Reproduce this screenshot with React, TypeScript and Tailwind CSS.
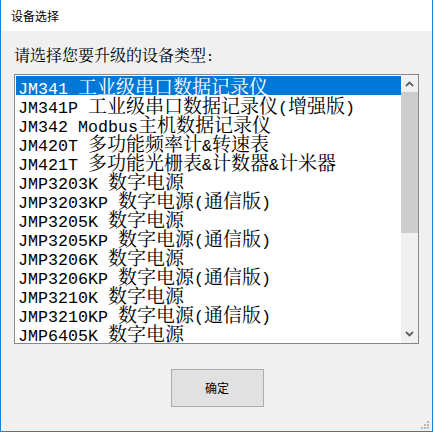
const devices = [
  "JM341 工业级串口数据记录仪",
  "JM341P 工业级串口数据记录仪(增强版)",
  "JM342 Modbus主机数据记录仪",
  "JM420T 多功能频率计&转速表",
  "JM421T 多功能光栅表&计数器&计米器",
  "JMP3203K 数字电源",
  "JMP3203KP 数字电源(通信版)",
  "JMP3205K 数字电源",
  "JMP3205KP 数字电源(通信版)",
  "JMP3206K 数字电源",
  "JMP3206KP 数字电源(通信版)",
  "JMP3210K 数字电源",
  "JMP3210KP 数字电源(通信版)",
  "JMP6405K 数字电源",
];

// SimSun style: half-width latin, full-width CJK
function Mixed({ text, small }: { text: string; small?: boolean }) {
  const parts = text.split(/([\x00-\x7f]+)/).filter((p) => p !== "");
  return (
    <>
      {parts.map((p, i) =>
        /^[\x00-\x7f]+$/.test(p) ? (
          <span
            key={i}
            className={
              small
                ? "font-['Liberation_Mono',monospace] text-[13.33px] leading-[16px]"
                : "font-['Liberation_Mono',monospace] text-[16.67px] leading-[19px]"
            }
          >
            {p}
          </span>
        ) : (
          <span key={i} className={small ? "leading-[16px]" : "leading-[19px]"}>
            {p}
          </span>
        )
      )}
    </>
  );
}

function Chevron({ up }: { up?: boolean }) {
  return (
    <svg width="9" height="6" viewBox="0 0 9 6">
      <path
        d={up ? "M1 5 L4.5 1.5 L8 5" : "M1 1 L4.5 4.5 L8 1"}
        fill="none"
        stroke="#606060"
        strokeWidth="1.8"
      />
    </svg>
  );
}

export default function App() {
  const selected = 0;

  return (
    <div className="w-[433px] h-[432px] flex flex-col border-x border-b border-[#1883d7] bg-[#f0f0f0] font-['Noto_Sans_CJK_SC',sans-serif]">
      {/* Title bar */}
      <div className="h-[31px] bg-white flex items-center pl-[10px] pt-[1px] text-[12px] text-black">
        设备选择
      </div>

      {/* Body */}
      <div className="relative flex-1 px-[13px] font-['Noto_Serif_CJK_SC','Noto_Sans_CJK_SC',serif]">
        <div className="mt-[16px] h-[16px] leading-[16px] text-[16px] text-black whitespace-pre">
          <Mixed text="请选择您要升级的设备类型:" small />
        </div>

        {/* Listbox */}
        <div className="mt-[11px] w-[405px] h-[270px] border border-[#828790] bg-white flex">
          <div className="flex-1 pt-[1px] pl-[1px] overflow-hidden">
            {devices.map((d, i) => (
              <div
                key={d}
                className={
                  i === selected
                    ? "h-[19px] leading-[19px] pl-[2px] text-[19px] whitespace-pre bg-[#0078d7] text-white"
                    : "h-[19px] leading-[19px] pl-[2px] text-[19px] whitespace-pre text-black"
                }
              >
                <Mixed text={d} />
              </div>
            ))}
          </div>

          {/* Scrollbar */}
          <div className="w-[17px] bg-[#f0f0f0] flex flex-col">
            <div className="h-[17px] flex items-center justify-center pt-[1px]">
              <Chevron up />
            </div>
            <div className="h-[141px] bg-[#cdcdcd]" />
            <div className="flex-1" />
            <div className="h-[17px] flex items-center justify-center pb-[1px]">
              <Chevron />
            </div>
          </div>
        </div>

        <div className="mt-[25px] flex justify-center">
          <button className="w-[93px] h-[38px] ml-[1px] border border-[#adadad] bg-[#e1e1e1] text-[12px] text-black font-['Noto_Sans_CJK_SC',sans-serif]">
            确定
          </button>
        </div>

        {/* Resize grip */}
        <svg className="absolute right-[3px] bottom-[2px]" width="8" height="8" viewBox="0 0 8 8">
          <rect x="6" y="0" width="2" height="2" fill="#b8b8b8" />
          <rect x="3" y="3" width="2" height="2" fill="#b8b8b8" />
          <rect x="6" y="3" width="2" height="2" fill="#b8b8b8" />
          <rect x="0" y="6" width="2" height="2" fill="#b8b8b8" />
          <rect x="3" y="6" width="2" height="2" fill="#b8b8b8" />
          <rect x="6" y="6" width="2" height="2" fill="#b8b8b8" />
        </svg>
      </div>
    </div>
  );
}
